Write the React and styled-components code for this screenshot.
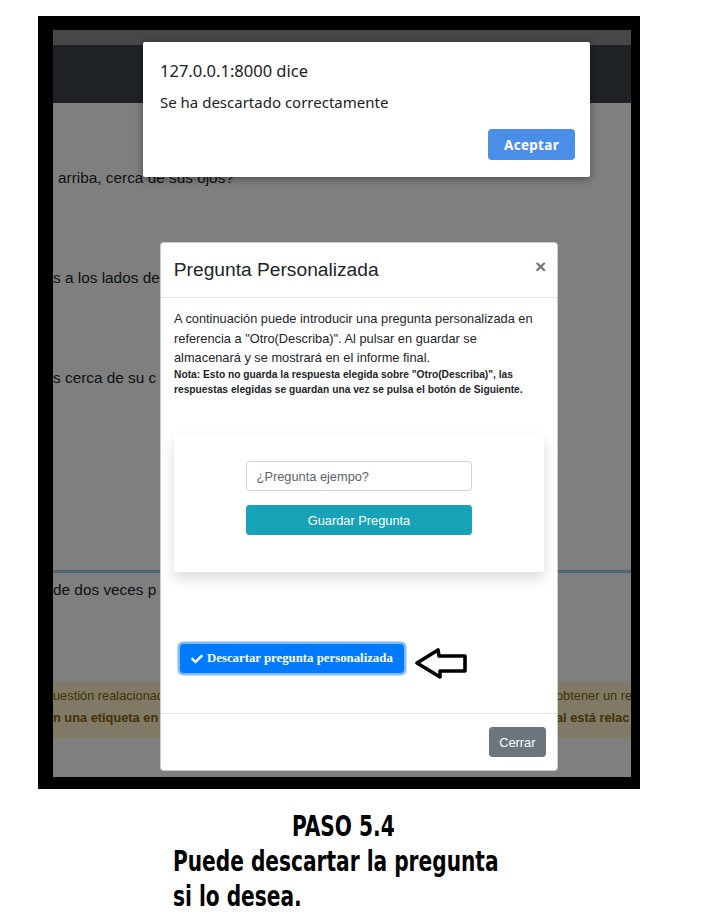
import React from 'react';
import styled, { createGlobalStyle } from 'styled-components';
import { FaCheck } from 'react-icons/fa';

const GlobalStyle = createGlobalStyle`
  html, body { margin: 0; padding: 0; background: #fff; }
  body { font-family: "Liberation Sans", Arial, sans-serif; }
  * { box-sizing: border-box; }
`;

const Page = styled.div`
  width: 702px;
  height: 917px;
  padding: 16px 0 0 38px;
  background: #fff;
  overflow: hidden;
`;

const Frame = styled.div`
  width: 602px;
  height: 773px;
  padding: 14px 9px 12px 15px;
  background: #000;
`;

const Screen = styled.div`
  position: relative;
  height: 100%;
  overflow: hidden;
  background: #fff;
  display: flex;
  flex-direction: column;
`;

const TopStrip = styled.div`
  flex: none;
  height: 15px;
  background: #8e8e8e;
`;

const NavBar = styled.div`
  flex: none;
  height: 58px;
  background: #3e444a;
`;

/* page behind the dialogs */
const Content = styled.div`
  display: flex;
  flex-direction: column;
  font-size: 15.36px;
  line-height: 22px;
  color: #212529;
  white-space: nowrap;
`;

const Question = styled.div`
  height: 100px;
  padding-left: ${p => p.$indent || 0}px;
  &:first-child { margin-top: 64px; }
`;

const Rule = styled.div`
  margin-top: 103px;
  height: 3px;
  background: #9fcfdc;
`;

const Plain = styled.div`
  margin-top: 6px;
`;

const Warning = styled.div`
  margin-top: 81px;
  height: 56px;
  padding-top: 3px;
  background: #fff3cd;
  color: #856404;
  font-size: 12.8px;
`;

const WarnLine = styled.div`
  display: grid;
  grid-template-columns: 1fr 75px;
  line-height: 22px;
  font-weight: ${p => (p.$bold ? 700 : 400)};
  & > span { overflow: hidden; }
`;

const Backdrop = styled.div`
  position: absolute;
  inset: 0;
  background: rgba(0, 0, 0, 0.5);
`;

/* browser alert */
const Alert = styled.div`
  position: absolute;
  left: 90px;
  top: 12px;
  width: 447px;
  padding: 18px 15px 17px 17px;
  background: #fff;
  border-radius: 2px;
  box-shadow: 0 2px 8px rgba(0, 0, 0, 0.4);
  font-family: "Noto Sans", "Open Sans", sans-serif;
  color: #202124;
`;

const AlertTitle = styled.div`
  font-size: 16.5px;
  line-height: 22px;
`;

const AlertText = styled.div`
  margin-top: 9px;
  font-size: 15px;
  line-height: 22px;
`;

const AlertActions = styled.div`
  display: flex;
  justify-content: flex-end;
  margin-top: 16px;
`;

const AcceptButton = styled.button`
  width: 87px;
  height: 31px;
  border: 0;
  border-radius: 4px;
  background: #4a8ee8;
  color: #fff;
  font-family: "Noto Sans", "Open Sans", sans-serif;
  font-size: 13.5px;
  font-weight: 700;
  letter-spacing: 0.3px;
`;

/* bootstrap modal */
const Modal = styled.div`
  position: absolute;
  left: 107px;
  top: 212px;
  width: 398px;
  background: #fff;
  border: 1px solid rgba(0, 0, 0, 0.2);
  border-radius: 4px;
  color: #212529;
`;

const ModalHeader = styled.div`
  display: flex;
  align-items: center;
  justify-content: space-between;
  padding: 12.8px;
  border-bottom: 1px solid #e4e4e4;
`;

const ModalTitle = styled.h4`
  margin: 0;
  font-size: 19.2px;
  font-weight: 400;
  line-height: 28.8px;
`;

const CloseButton = styled.span`
  margin-right: -2px;
  margin-top: -6px;
  font-size: 19.2px;
  font-weight: 700;
  color: #000;
  opacity: 0.55;
`;

const ModalBody = styled.div`
  padding: 11px 13px 40px;
`;

const Lead = styled.p`
  margin: 0;
  font-size: 12.8px;
  line-height: 19.2px;
`;

const Note = styled.div`
  font-size: 10.24px;
  font-weight: 700;
  line-height: 15px;
`;

const Card = styled.div`
  margin-top: 39.4px;
  height: 136px;
  padding: 25px 0 0;
  display: flex;
  flex-direction: column;
  align-items: center;
  gap: 14px;
  background: #fff;
  box-shadow: 0 6px 13px rgba(0, 0, 0, 0.15);
`;

const Input = styled.input`
  width: 226px;
  height: 30px;
  padding: 0 9.6px;
  border: 1px solid #ced4da;
  border-radius: 3.2px;
  font-family: "Liberation Sans", Arial, sans-serif;
  font-size: 12.8px;
  color: #495057;
  &::placeholder { color: #5c636a; }
`;

const Button = styled.button`
  height: 30px;
  padding: 0 9.6px;
  border: 1px solid ${p => p.$color};
  border-radius: 3.2px;
  background: ${p => p.$color};
  color: #fff;
  font-family: "Liberation Sans", Arial, sans-serif;
  font-size: 12.8px;
  width: ${p => (p.$wide ? '226px' : 'auto')};
`;

const DiscardRow = styled.div`
  display: flex;
  align-items: flex-start;
  gap: 9px;
  height: 29px;
  margin-top: 72px;
  padding-left: 6px;
`;

const DiscardButton = styled.button`
  display: inline-flex;
  align-items: center;
  gap: 4px;
  height: 29px;
  padding: 0 10px;
  border: 1px solid #007bff;
  border-radius: 3.2px;
  background: #007bff;
  color: #fff;
  font-family: "Liberation Serif", "Times New Roman", serif;
  font-size: 12.8px;
  font-weight: 700;
  box-shadow: 0 0 0 2.5px rgba(0, 123, 255, 0.5);
`;

const Arrow = styled.svg`
  flex: none;
  margin-top: 2px;
`;

const ModalFooter = styled.div`
  display: flex;
  justify-content: flex-end;
  padding: 12.8px 11px 12.8px 12.8px;
  border-top: 1px solid #e4e4e4;
`;

/* caption under the screenshot */
const Caption = styled.div`
  margin: 20px 0 0 135px;
  color: #000;
`;

const CaptionLine = styled.div`
  margin-left: ${p => p.$indent || 0}px;
  font-family: "DejaVu Sans Condensed", "DejaVu Sans", sans-serif;
  font-stretch: condensed;
  font-size: 28px;
  font-weight: 700;
  line-height: 35px;
  white-space: nowrap;
  transform: scaleX(0.8);
  transform-origin: left center;
`;

export default function App() {
  return (
    <Page>
      <GlobalStyle />
      <Frame>
        <Screen>
          <TopStrip />
          <NavBar />
          <Content>
            <Question $indent={5}>arriba, cerca de sus ojos?</Question>
            <Question>s a los lados de</Question>
            <Question>s cerca de su c</Question>
            <Rule />
            <Plain>de dos veces p</Plain>
            <Warning>
              <WarnLine>
                <span>uestión realacionad</span>
                <span>obtener un re</span>
              </WarnLine>
              <WarnLine $bold>
                <span>n una etiqueta en</span>
                <span>al está relac</span>
              </WarnLine>
            </Warning>
          </Content>
          <Backdrop />

          <Modal>
            <ModalHeader>
              <ModalTitle>Pregunta Personalizada</ModalTitle>
              <CloseButton>×</CloseButton>
            </ModalHeader>
            <ModalBody>
              <Lead>
                A continuación puede introducir una pregunta personalizada en
                referencia a "Otro(Describa)". Al pulsar en guardar se
                almacenará y se mostrará en el informe final.
              </Lead>
              <Note>
                Nota: Esto no guarda la respuesta elegida sobre "Otro(Describa)", las
                respuestas elegidas se guardan una vez se pulsa el botón de Siguiente.
              </Note>
              <Card>
                <Input placeholder="¿Pregunta ejempo?" />
                <Button $color="#17a2b8" $wide>Guardar Pregunta</Button>
              </Card>
              <DiscardRow>
                <DiscardButton>
                  <FaCheck size={12} />
                  Descartar pregunta personalizada
                </DiscardButton>
                <Arrow width="56" height="35" viewBox="0 0 56 35">
                  <polygon
                    points="4,17 25,4 26,10 52,10 52,25 27,25 27,31"
                    fill="none"
                    stroke="#000"
                    strokeWidth="3.6"
                    strokeLinejoin="round"
                  />
                </Arrow>
              </DiscardRow>
            </ModalBody>
            <ModalFooter>
              <Button $color="#6c757d">Cerrar</Button>
            </ModalFooter>
          </Modal>

          <Alert>
            <AlertTitle>127.0.0.1:8000 dice</AlertTitle>
            <AlertText>Se ha descartado correctamente</AlertText>
            <AlertActions>
              <AcceptButton>Aceptar</AcceptButton>
            </AlertActions>
          </Alert>
        </Screen>
      </Frame>
      <Caption>
        <CaptionLine $indent={119}>PASO 5.4</CaptionLine>
        <CaptionLine>Puede descartar la pregunta</CaptionLine>
        <CaptionLine>si lo desea.</CaptionLine>
      </Caption>
    </Page>
  );
}
